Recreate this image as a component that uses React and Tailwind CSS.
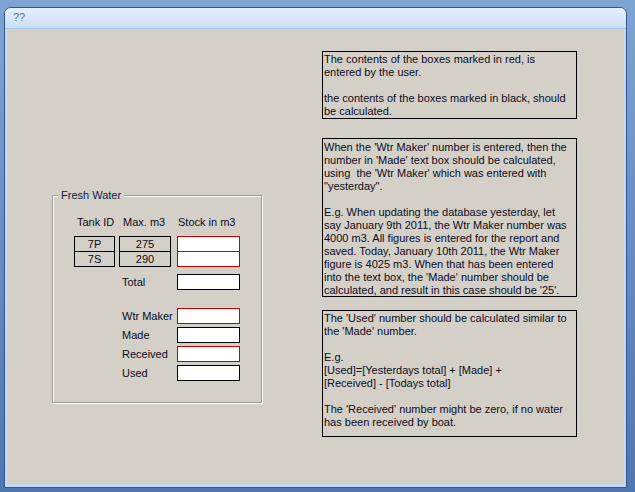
import React from 'react';

const font = { fontFamily: '"Liberation Sans", Arial, sans-serif' };

const notes = [
    {
        cls: 'h-[68px] pt-px',
        lines: [
            'The contents of the boxes marked in red, is',
            'entered by the user.',
            '',
            'the contents of the boxes marked in black, should',
            'be calculated.',
        ],
    },
    {
        cls: 'h-[159px] mt-[19px] pt-[2px]',
        lines: [
            "When the 'Wtr Maker' number is entered, then the",
            "number in 'Made' text box should be calculated,",
            "using  the 'Wtr Maker' which was entered with",
            '"yesterday".',
            '',
            'E.g. When updating the database yesterday, let',
            'say January 9th 2011, the Wtr Maker number was',
            '4000 m3. All figures is entered for the report and',
            'saved. Today, January 10th 2011, the Wtr Maker',
            'figure is 4025 m3. When that has been entered',
            "into the text box, the 'Made' number should be",
            "calculated, and result in this case should be '25'.",
        ],
    },
    {
        cls: 'h-[127px] mt-[13px] pt-px',
        lines: [
            "The 'Used' number should be calculated similar to",
            "the 'Made' number.",
            '',
            'E.g.',
            '[Used]=[Yesterdays total] + [Made] +',
            '[Received] - [Todays total]',
            '',
            "The 'Received' number might be zero, if no water",
            'has been received by boat.',
        ],
    },
];

function Field({red}) {
    return (
        <div className={`w-[63px] h-[16px] bg-white border ${red ? 'border-[#c80000]' : 'border-black'}`}></div>
    );
}

function LabelRow({label, red, className = ''}) {
    return (
        <div className={`flex items-center h-[16px] ${className}`}>
            <div className="w-[41px]"></div>
            <div className="w-[52px] ml-[4px] pl-[3px] whitespace-nowrap">{label}</div>
            <div className="ml-[6px]"><Field red={red}/></div>
        </div>
    );
}

function TankRow({id, max, className = ''}) {
    return (
        <div className={`flex h-[16px] ${className}`}>
            <div className="w-[41px] border border-black flex items-center justify-center">{id}</div>
            <div className="w-[52px] ml-[4px] border border-black flex items-center justify-center">{max}</div>
            <div className="ml-[6px]"><Field red/></div>
        </div>
    );
}

export default function App() {
    return (
        <div className="w-[635px] h-[492px] bg-gradient-to-b from-[#7ea4d4] to-[#4e77b1] pt-[7px] pl-[4px] text-[11px] leading-[13px] text-[#0c0c1c]" style={font}>
            <div className="w-[623px] h-[481px] rounded-t-[7px] border border-[#34568a] bg-[#c2d8f5] flex flex-col">
                <div className="h-[21px] shrink-0 rounded-t-[6px] bg-gradient-to-b from-[#e6f0fd] to-[#cbddf6] border-b border-[#a8c6ee] flex items-center pl-[8px] pb-[2px] text-[#707070]">
                    ??
                </div>
                <div className="flex-1 mx-[2px] mb-[3px] bg-[#d4d0c8] flex items-start">
                    <div className="relative ml-[45px] mt-[166px] w-[210px] h-[208px] border border-[#a09c94] shadow-[inset_1px_1px_0_#ffffff,1px_1px_0_#ffffff] pl-[21px] pt-[20px]">
                        <span className="absolute -top-[7px] left-[5px] px-[3px] bg-[#d4d0c8] text-[#10204a]">Fresh Water</span>
                        <div className="flex h-[13px]">
                            <div className="w-[41px] pl-[3px] whitespace-nowrap">Tank ID</div>
                            <div className="w-[52px] ml-[4px] pl-[4px] whitespace-nowrap">Max. m3</div>
                            <div className="w-[63px] ml-[6px] pl-px whitespace-nowrap">Stock in m3</div>
                        </div>
                        <TankRow id="7P" max="275" className="mt-[7px]"/>
                        <TankRow id="7S" max="290" className="-mt-px"/>
                        <LabelRow label="Total" className="mt-[7px]"/>
                        <LabelRow label="Wtr Maker" red className="mt-[18px]"/>
                        <LabelRow label="Made" className="mt-[3px]"/>
                        <LabelRow label="Received" red className="mt-[3px]"/>
                        <LabelRow label="Used" className="mt-[3px]"/>
                    </div>
                    <div className="ml-[60px] mt-[22px] w-[255px] flex flex-col">
                        {notes.map((n, i) => (
                            <div key={i} className={`border border-black pl-px whitespace-pre ${n.cls}`}>
                                {n.lines.map((l, j) => (
                                    <div key={j} className="h-[13px]">{l}</div>
                                ))}
                            </div>
                        ))}
                    </div>
                </div>
            </div>
        </div>
    );
}
